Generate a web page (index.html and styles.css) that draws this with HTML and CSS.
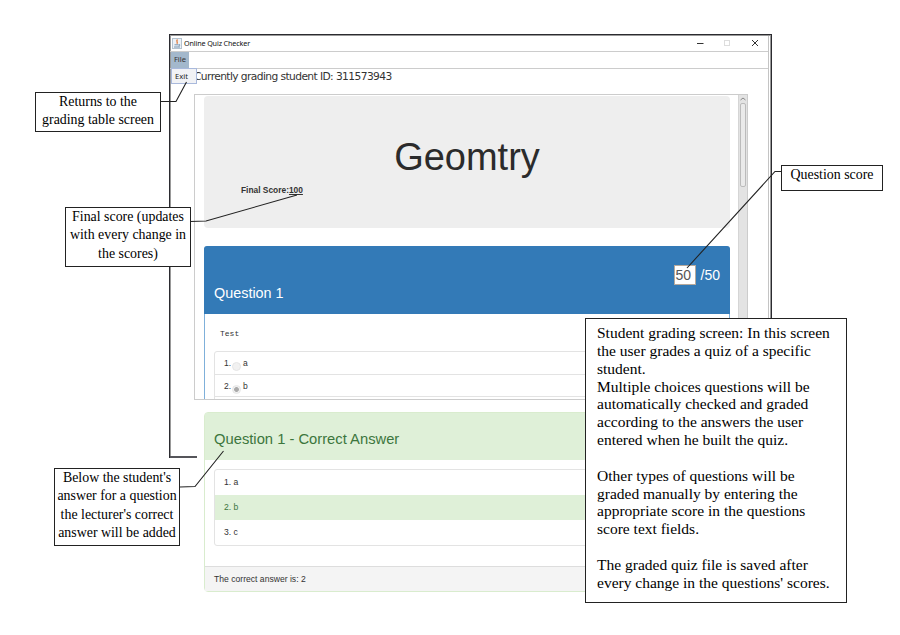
FILE: index.html
```html
<!DOCTYPE html>
<html lang="en">
<head>
<meta charset="utf-8">
<title>Online Quiz Checker</title>
<link rel="stylesheet" href="styles.css">
</head>
<body>
<main class="page">
  <section class="window">
    <header class="titlebar">
      <svg class="java" viewBox="0 0 10 11"><rect x=".5" y=".5" width="9" height="10" fill="#edf2f7" stroke="#b5c3d0"/><path d="M5.500 1.500C3.500 3.200 6.500 4 4.800 5.800" fill="none" stroke="#e07a3c" stroke-width="1.300"/><path d="M2.500 6.800h4.200M2 9h6M7 6.500c1.500 0 1 1.400-.5 1.500" fill="none" stroke="#587c9d" stroke-width=".8"/></svg>
      <h1 class="title">Online Quiz Checker</h1>
      <svg class="controls" viewBox="0 0 64 10"><path d="M1 5.500h6.500" stroke="#333" fill="none"/><rect x="28.500" y="2.500" width="5" height="5" fill="none" stroke="#ddd"/><path d="M56 2l6 6M62 2l-6 6" stroke="#333" fill="none"/></svg>
    </header>
    <nav class="menubar">
      <span class="menu">File</span>
      <div class="popup">Exit</div>
    </nav>
    <p class="student">Currently grading student ID: 311573943</p>
    <div class="viewport">
      <div class="quiz">
        <div class="jumbo">
          <h2 class="quiz-name">Geomtry</h2>
          <p class="final">Final Score:<u>100</u></p>
        </div>
        <article class="question">
          <header class="question-head">
            <div class="score"><span class="score-field">50</span><span>/50</span></div>
            <h3 class="heading">Question 1</h3>
          </header>
          <div class="question-body">
            <pre class="prompt">Test</pre>
            <ul class="options">
              <li class="option"><span>1.</span><i class="radio"></i><span>a</span></li>
              <li class="option"><span>2.</span><i class="radio radio-on"></i><span>b</span></li>
              <li class="option"></li>
            </ul>
          </div>
        </article>
      </div>
      <div class="scrollbar">
        <svg class="arrow" viewBox="0 0 8 8"><path d="M1.500 5L4 3l2.500 2" fill="none" stroke="#888"/></svg>
        <div class="thumb"></div>
      </div>
    </div>
    <article class="correct">
      <header class="correct-head"><h3 class="heading">Question 1 - Correct Answer</h3></header>
      <div class="correct-body">
        <ul class="answers">
          <li class="answer">1. a</li>
          <li class="answer answer-right">2. b</li>
          <li class="answer">3. c</li>
        </ul>
      </div>
      <footer class="correct-foot">The correct answer is: 2</footer>
    </article>
  </section>

  <svg class="leaders" viewBox="0 0 900 635">
    <path d="M160 101.500H176L186.500 82"/>
    <path d="M190 221.500L206 221L297 195"/>
    <path d="M782 171.500H775L687 268"/>
    <path d="M180 487L195 486.500L223.500 451"/>
  </svg>
  <aside class="note note-exit">Returns to the<br>grading table screen</aside>
  <aside class="note note-final">Final score (updates<br>with every change in<br>the scores)</aside>
  <aside class="note note-score">Question score</aside>
  <aside class="note note-below">Below the student's<br>answer for a question<br>the lecturer's correct<br>answer will be added</aside>
  <aside class="note note-main">
    <p>Student grading screen: In this screen<br>the user grades a quiz of a specific<br>student.<br>Multiple choices questions will be<br>automatically checked and graded<br>according to the answers the user<br>entered when he built the quiz.</p>
    <p>Other types of questions will be<br>graded manually by entering the<br>appropriate score in the questions<br>score text fields.</p>
    <p>The graded quiz file is saved after<br>every change in the questions' scores.</p>
  </aside>
</main>
</body>
</html>
```
FILE: styles.css
```css
* { box-sizing: border-box; margin: 0; padding: 0; }
body { background: #fff; font-family: "Liberation Sans", Arial, sans-serif; color: #333; }
.page { position: relative; width: 900px; height: 635px; padding: 34px 0 0 169px; overflow: hidden; }

.window { position: relative; width: 603px; height: 424px; border: solid #2b2b30; border-width: 1px 1px 0 1px; box-shadow: inset 0 1px #999, inset -1px 0 #999, inset -2px 0 #fff, inset -3px 0 #c4c4c4, inset 1px 0 #999; }
.window::after { content: ""; position: absolute; left: 0; bottom: 0; width: 27px; height: 2px; background: #55555a; }

.titlebar { display: flex; align-items: center; height: 17px; padding-left: 2px; margin-right: 3px; border-bottom: 1px solid #ccc; }
.java { width: 10px; height: 11px; }
.title { margin-left: 2px; font: 7.200px/14px "Noto Sans", sans-serif; letter-spacing: -.14px; color: #111; white-space: nowrap; }
.controls { width: 64px; height: 10px; margin: 0 8px 0 auto; }

.menubar { position: relative; height: 17px; margin-right: 3px; padding-left: 1px; border-bottom: 1px solid #ccc; font: 7.600px/15px "Noto Sans", sans-serif; }
.menu { display: block; width: 18px; height: 16px; background: #a3b8cc; text-align: center; }
.popup { position: absolute; left: 1px; top: 16px; width: 26px; height: 16px; padding-left: 3px; border: 1px solid #a9b9dc; background: #f1f2f5; line-height: 14px; color: #222; }

.student { height: 25px; padding-left: 24px; font: 10.700px/15px "DejaVu Sans", sans-serif; letter-spacing: -.6px; color: #333; }

.viewport { display: flex; width: 554px; height: 306px; margin-left: 24px; border: 1px solid #ccc; overflow: hidden; }
.quiz { width: 526px; margin-left: 9px; padding-top: 1px; }
.jumbo { height: 132px; padding: 37px 37px 0; border-radius: 4px; background: #eee; }
.quiz-name { font-size: 38px; font-weight: 400; line-height: 48px; text-align: center; color: #2b2b2b; }
.final { margin-top: 3px; font-size: 8.400px; font-weight: 700; line-height: 12px; }
.question { height: 200px; margin-top: 18px; border: 1px solid #7fb0da; border-radius: 4px; }
.question-head { height: 68px; margin: -1px -1px 0; padding: 19px 10px 0; border-radius: 3px 3px 0 0; background: #337ab7; color: #fff; }
.score { display: flex; justify-content: flex-end; gap: 5px; font-size: 14px; line-height: 20px; }
.score-field { width: 22px; height: 20px; padding-left: 1px; border: 1px solid #b6a99c; background: #fff; color: #555; line-height: 18px; }
.heading { font-size: 14.400px; font-weight: 400; line-height: 18px; }
.question-head .heading { line-height: 17px; }
.correct .heading { font-size: 14.750px; }
.question-body { padding: 15px 9px 0; }
.prompt { height: 22px; padding-left: 6px; font: 8px/10px "Liberation Mono", monospace; }
.options, .answers { list-style: none; border: 1px solid #e3e3e3; border-radius: 3px; }
.option { display: flex; height: 22.500px; padding-left: 9px; border-bottom: 1px solid #e3e3e3; font-size: 8.500px; line-height: 23px; }
.radio { width: 9px; height: 9px; margin: 10px 2px 0 1px; border: 1px solid #e6e6e6; border-radius: 50%; background: #f1f1f1; }
.radio-on { background: radial-gradient(circle, #aaa 0 2px, #f1f1f1 2.800px); }
.scrollbar { width: 9px; margin-left: auto; background: #e3e3e3; border-left: 1px solid #d5d5d5; }
.arrow { display: block; width: 8px; height: 8px; }
.thumb { width: 6px; height: 84px; margin-left: 1px; border: 1px solid #bbb; border-radius: 2px; background: #eaeaea; }

.correct { width: 526px; height: 180px; margin: 12px 0 0 34px; border: 1px solid #d9ecce; border-radius: 4px; background: #fff; }
.correct-head { height: 47px; padding: 17px 9px 0; background: #dff0d8; color: #3c763d; }
.correct-body { height: 106px; padding: 9px 9px 0; }
.answer { height: 25px; padding-left: 9px; font-size: 8.600px; line-height: 25px; }
.answer-right { background: #dff0d8; color: #3c763d; }
.correct-foot { height: 25px; padding-left: 9px; border-top: 1px solid #ddd; background: #f4f4f4; font-size: 8.600px; line-height: 24px; }

.leaders { position: absolute; left: 0; top: 0; width: 900px; height: 635px; fill: none; stroke: #222; stroke-width: 1.100; }
.note { position: absolute; border: 1px solid #222; background: #fff; color: #000; font: 13.900px/18.300px "Liberation Serif", serif; text-align: center; white-space: nowrap; }
.note-exit { left: 35px; top: 92px; width: 126px; height: 40px; line-height: 17.800px; }
.note-final { left: 65px; top: 207px; width: 126px; height: 60px; }
.note-score { left: 781px; top: 165px; width: 102px; height: 26px; line-height: 17px; }
.note-below { left: 54px; top: 468px; width: 126px; height: 78px; }
.note-main { left: 585px; top: 318px; width: 262px; height: 285px; padding: 5px 11px; font-size: 15.500px; line-height: 17.850px; text-align: left; }
.note-main p + p { margin-top: 17.850px; }
```
